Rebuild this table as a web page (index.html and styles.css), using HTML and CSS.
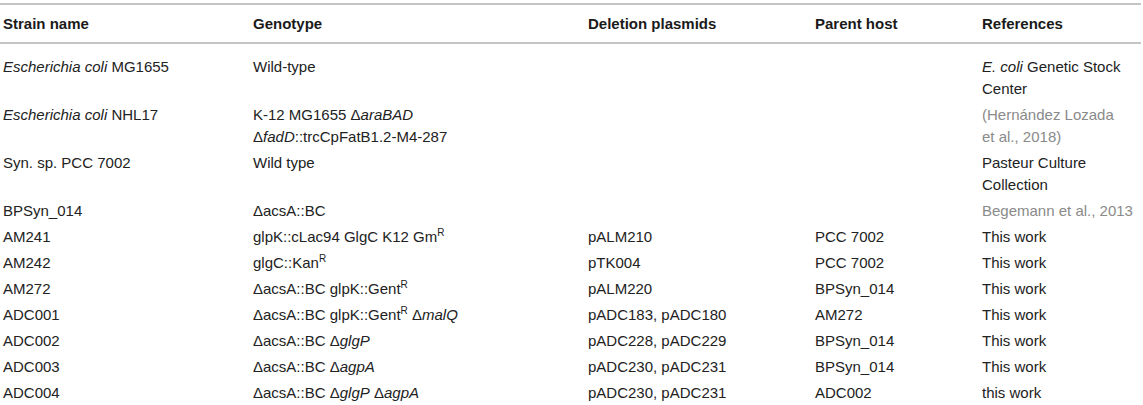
FILE: index.html
```html
<!DOCTYPE html>
<html>
<head>
<meta charset="utf-8">
<link rel="stylesheet" href="styles.css">
</head>
<body>
<table class="strains">
  <colgroup>
    <col class="c1"><col class="c2"><col class="c3"><col class="c4"><col class="c5">
  </colgroup>
  <thead>
    <tr>
      <th>Strain name</th>
      <th>Genotype</th>
      <th>Deletion plasmids</th>
      <th>Parent host</th>
      <th>References</th>
    </tr>
  </thead>
  <tbody>
    <tr class="first">
      <td><i>Escherichia coli</i> MG1655</td>
      <td>Wild-type</td>
      <td></td>
      <td></td>
      <td><i>E. coli</i> Genetic Stock<br>Center</td>
    </tr>
    <tr>
      <td><i>Escherichia coli</i> NHL17</td>
      <td>K-12 MG1655 Δ<i>araBAD</i><br>Δ<i>fadD</i>::trcCpFatB1.2-M4-287</td>
      <td></td>
      <td></td>
      <td><span class="link">(Hernández Lozada<br>et al., 2018)</span></td>
    </tr>
    <tr>
      <td>Syn. sp. PCC 7002</td>
      <td>Wild type</td>
      <td></td>
      <td></td>
      <td>Pasteur Culture<br>Collection</td>
    </tr>
    <tr>
      <td>BPSyn_014</td>
      <td>ΔacsA::BC</td>
      <td></td>
      <td></td>
      <td><span class="link">Begemann et al., 2013</span></td>
    </tr>
    <tr>
      <td>AM241</td>
      <td>glpK::cLac94 GlgC K12 Gm<sup>R</sup></td>
      <td>pALM210</td>
      <td>PCC 7002</td>
      <td>This work</td>
    </tr>
    <tr>
      <td>AM242</td>
      <td>glgC::Kan<sup>R</sup></td>
      <td>pTK004</td>
      <td>PCC 7002</td>
      <td>This work</td>
    </tr>
    <tr>
      <td>AM272</td>
      <td>ΔacsA::BC glpK::Gent<sup>R</sup></td>
      <td>pALM220</td>
      <td>BPSyn_014</td>
      <td>This work</td>
    </tr>
    <tr>
      <td>ADC001</td>
      <td>ΔacsA::BC glpK::Gent<sup>R</sup> Δ<i>malQ</i></td>
      <td>pADC183, pADC180</td>
      <td>AM272</td>
      <td>This work</td>
    </tr>
    <tr>
      <td>ADC002</td>
      <td>ΔacsA::BC Δ<i>glgP</i></td>
      <td>pADC228, pADC229</td>
      <td>BPSyn_014</td>
      <td>This work</td>
    </tr>
    <tr>
      <td>ADC003</td>
      <td>ΔacsA::BC Δ<i>agpA</i></td>
      <td>pADC230, pADC231</td>
      <td>BPSyn_014</td>
      <td>This work</td>
    </tr>
    <tr>
      <td>ADC004</td>
      <td>ΔacsA::BC Δ<i>glgP</i> Δ<i>agpA</i></td>
      <td>pADC230, pADC231</td>
      <td>ADC002</td>
      <td>this work</td>
    </tr>
  </tbody>
</table>
</body>
</html>
```

FILE: styles.css
```css
html, body {
  margin: 0;
  padding: 0;
  background: #ffffff;
}

body {
  padding-top: 3px;
  font-family: "Liberation Sans", Arial, sans-serif;
  font-size: 15px;
  color: #222222;
}

.strains {
  width: 1141px;
  border-collapse: collapse;
  table-layout: fixed;
}

.c1 { width: 250px; }
.c2 { width: 335px; }
.c3 { width: 227px; }
.c4 { width: 167px; }
.c5 { width: 162px; }

.strains th {
  text-align: left;
  font-weight: bold;
  color: #1a1a1a;
  padding: 0 0 0 3px;
  height: 37px;
  border-top: 2px solid #c4c4c4;
  border-bottom: 2px solid #c4c4c4;
  vertical-align: middle;
  white-space: nowrap;
}

.strains td {
  padding: 2px 2px 2px 3px;
  line-height: 22px;
  vertical-align: top;
  white-space: nowrap;
}

.strains tr.first td {
  padding-top: 12px;
}

.strains i {
  font-style: italic;
}

.strains sup {
  font-size: 10px;
  line-height: 0;
  vertical-align: 6px;
}

.link {
  color: #8a8a8a;
}
```
